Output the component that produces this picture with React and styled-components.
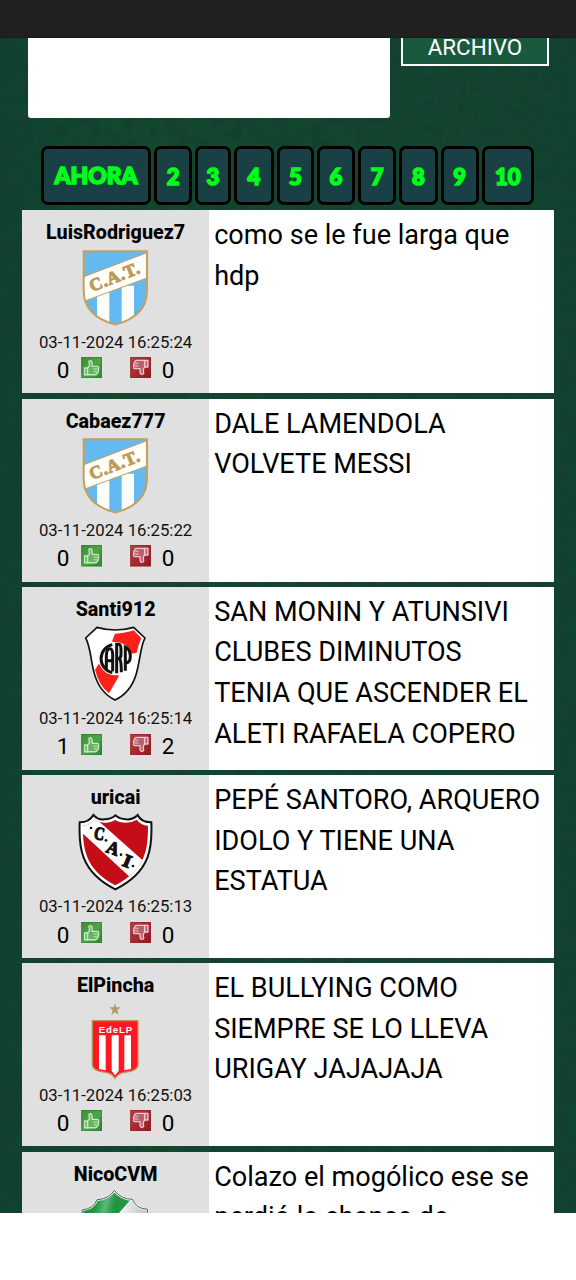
import React from "react";
import styled, { createGlobalStyle } from "styled-components";

const Global = createGlobalStyle`
  *, *::before, *::after { box-sizing: border-box; }
  body { margin: 0; background: #fff; font-family: Roboto, "Liberation Sans", sans-serif; color: #000; }
  svg { display: block; }
`;

const TopBar = styled.header`
  height: 37.7px;
  background: #202020;
  border-bottom: 1px solid #151b18;
`;

const Page = styled.main`
  position: relative;
  isolation: isolate;
  height: 1175px;
  overflow: hidden;
  background: linear-gradient(90deg, #0f432f, #12492f 20%, #12462f 65%, #12442f 90%, #104332);
`;

const Texture = styled.svg`
  position: absolute;
  inset: 0;
  z-index: -1;
`;

const FormRow = styled.section`
  display: flex;
  align-items: flex-start;
  gap: 11.4px;
  padding-left: 28px;
`;

const MessageBox = styled.div`
  width: 361.8px;
  height: 80.7px;
  background: #fff;
  border-radius: 0 0 3px 3px;
`;

const ArchiveButton = styled.button`
  width: 147.6px;
  height: 28.6px;
  padding: 0 0 7.6px;
  border: 2.5px solid #fff;
  border-top: 0;
  background: #1b593f;
  color: #fff;
  font: 400 22.4px/19px Roboto, sans-serif;
`;

const Pager = styled.nav`
  display: flex;
  margin-top: 28px;
  padding-left: 41.2px;
  height: 58.3px;
`;

const PageLink = styled.a`
  display: flex;
  align-items: center;
  justify-content: center;
  width: ${(p) => p.$width}px;
  margin-right: 3px;
  padding-top: ${(p) => (p.$word ? 0.6 : 2)}px;
  border: 3px solid #000;
  border-radius: 7px;
  background: #194044;
  color: #00ff19;
  -webkit-text-stroke: 1.6px #00ff19;
  font: 900 ${(p) => (p.$word ? 22.8 : 22)}px/1 Lato, sans-serif;
  white-space: nowrap;
`;

const Feed = styled.section`
  display: flex;
  flex-direction: column;
  gap: 5.2px;
  margin: 5.7px 21.8px 0 22.3px;
`;

const Post = styled.article`
  display: flex;
  flex: none;
  height: 183.06px;
  background: #fff;
`;

const Author = styled.aside`
  display: flex;
  flex-direction: column;
  align-items: center;
  flex: none;
  width: 186.6px;
  padding-top: 7.1px;
  background: #e0e0e0;
`;

const Name = styled.strong`
  font-size: 19.7px;
  line-height: 32.5px;
  font-weight: 800;
`;

const Crest = styled.svg`
  flex: none;
  width: 75px;
  height: 77.3px;
  margin-top: -1.3px;
`;

const DateText = styled.time`
  margin-top: 0.7px;
  font-size: 16.75px;
  line-height: 30.2px;
  color: #111;
`;

const Votes = styled.div`
  display: flex;
  align-items: flex-end;
  align-self: flex-start;
  margin-top: 0.2px;
  padding-left: 34.4px;
`;

const VotePair = styled.div`
  display: flex;
  align-items: flex-end;
  gap: 11.4px;
  & + & { margin-left: 27.8px; gap: 10.8px; }
`;

const Count = styled.span`
  width: 12.6px;
  font-size: 22.5px;
  line-height: 16.6px;
`;

const Body = styled.p`
  margin: 0;
  padding: 5px 12px 0 5.3px;
  font-size: 27.07px;
  line-height: 40.6px;
`;

function Thumb({ down }) {
  const id = down ? "thumb-down" : "thumb-up";
  return (
    <svg width="21.2" height="21.4" viewBox="0 0 62 64">
      <defs>
        <linearGradient id={id} x1="0" y1="0" x2="1" y2="1">
          <stop offset="0" stopColor={down ? "#b34545" : "#3f8a38"} />
          <stop offset=".5" stopColor={down ? "#a82a30" : "#4aa648"} />
          <stop offset="1" stopColor={down ? "#8d1a20" : "#2f8630"} />
        </linearGradient>
      </defs>
      <rect width="62" height="64" fill={`url(#${id})`} />
      <rect x="1.5" y="1.5" width="59" height="61" fill="none" stroke={down ? "#8d2028" : "#2f7c2b"} strokeWidth="3" opacity=".6" />
      <g
        transform={down ? "translate(0 63) scale(1 -1)" : undefined}
        fill={down ? "#b9606c" : "#67b363"}
        stroke={down ? "#ecc9d0" : "#c6e8bf"}
        strokeWidth="4"
        strokeLinejoin="round"
      >
        {down ? (
          <>
            <path d="M43 33H53V53H43Z" />
            <path d="M43 33L39 26L40 13Q32 8 30 15L29 28H13Q8 30 11 34Q8 38 12 41Q9 45 14 48Q14 53 19 53H43Z" />
            <path d="M14 36H25M15 44H25" fill="none" strokeWidth="3" />
          </>
        ) : (
          <>
            <path d="M10 33H19V53H10Z" />
            <path d="M19 33L25 26L23 13Q30 8 32 15L33 28H49Q54 30 51 34Q54 38 50 41Q53 45 48 48Q48 53 43 53H19Z" />
            <path d="M37 36H48M37 44H47" fill="none" strokeWidth="3" />
          </>
        )}
      </g>
    </svg>
  );
}

function Tucuman() {
  return (
    <Crest viewBox="175 130 225 232">
      <defs>
        <clipPath id="cat"><path d="M192 137H382V255C382 305 349 340 287 357C226 340 192 305 192 255Z" /></clipPath>
      </defs>
      <g clipPath="url(#cat)">
        <path fill="#63b9f0" d="M190 135H385V360H190Z" />
        <path fill="#fafdf9" d="M232 250H269V360H232ZM306 240H343V360H306Z" />
        <path fill="#fffefb" stroke="#c5a05b" strokeWidth="3" d="M185 216L390 138V214L185 290Z" />
      </g>
      <text transform="translate(217 259) rotate(-21.5)" fontFamily="Liberation Serif, serif" fontWeight="700" fontSize="53" textLength="158" lengthAdjust="spacing" fill="#bd9a58" stroke="#bd9a58" strokeWidth="3">C.A.T.</text>
      <path d="M192 137H382V255C382 305 349 340 287 357C226 340 192 305 192 255Z" fill="none" stroke="#c5a05b" strokeWidth="6" />
    </Crest>
  );
}

function River() {
  const outline = "M232 143Q287 159 342 143L376 175C361 205 362 241 350 282Q333 339 286 361Q240 339 224 282C212 241 214 205 198 175Z";
  return (
    <Crest viewBox="175 136 225 232">
      <path d={outline} fill="#fff" stroke="#111" strokeWidth="5" strokeLinejoin="round" />
      <path fill="#ff2019" d="M286 162Q318 161 342 152L365 176Q355 198 351 219L335 222L277 185ZM237 253L226 270Q238 318 268 341L298 289Z" />
      <circle cx="287" cy="237" r="50" fill="#fff" />
      <g fill="none" stroke="#111" strokeWidth="9">
        <path d="M278 195A43 43 0 0 0 278 279" />
        <path d="M260 272V229Q260 207 271 207Q279 207 279 227V275M260 243H279" />
        <path d="M291 281V194H297Q304 194 304 211V226Q304 236 294 238M300 237Q305 244 305 278" />
        <path d="M317 273V202Q332 209 332 230Q332 250 318 250" />
      </g>
    </Crest>
  );
}

function Independiente() {
  const outline = "M221 135Q236 151 255 148Q276 147 287 136Q299 147 319 148Q340 150 354 135Q364 157 395 157C398 227 396 304 287 358C180 304 177 227 180 157Q209 157 221 135Z";
  return (
    <Crest viewBox="175 129 225 232">
      <defs>
        <clipPath id="cai"><path d="M224 149Q242 161 262 158Q276 157 287 150Q299 158 319 158Q337 158 351 149Q363 166 385 167C385 232 381 298 287 346C195 298 189 232 190 167Q212 166 224 149Z" /></clipPath>
      </defs>
      <path d={outline} fill="#fff" stroke="#111" strokeWidth="6" />
      <g clipPath="url(#cai)">
        <path fill="#c40d17" d="M175 130H400V360H175Z" />
        <path fill="#fff" d="M160 164L205 125L400 298L354 343Z" />
      </g>
      <g fontFamily="Liberation Serif, serif" fontWeight="700" fontSize="55" fill="#111" stroke="#111" strokeWidth="3.5">
        <text transform="translate(221 206) rotate(10)" textLength="31" lengthAdjust="spacingAndGlyphs">C</text>
        <text transform="translate(257 245) rotate(20)" textLength="37" lengthAdjust="spacingAndGlyphs">A</text>
        <text transform="translate(305 286) rotate(22)" textLength="24" lengthAdjust="spacingAndGlyphs">I</text>
      </g>
      <g fill="#111"><circle cx="214" cy="174" r="4" /><circle cx="259" cy="211" r="4" /><circle cx="304" cy="254" r="4" /><circle cx="340" cy="288" r="4" /></g>
    </Crest>
  );
}

function Estudiantes() {
  return (
    <Crest viewBox="175 123 225 232">
      <path fill="#b19a6b" d="M286 126L290 139H303L293 148L297 162L286 154L275 162L279 148L269 139H282Z" />
      <path fill="#ff1824" stroke="#b89557" strokeWidth="4" d="M218 179H355V310Q355 331 314 334Q296 337 286 352Q277 337 258 334Q218 331 218 310Z" />
      <path fill="#fff" d="M238 223H258V328L238 324ZM276 223H297V330L286 343L276 330ZM314 223H334V324L314 328Z" />
      <text x="237" y="215" fontFamily="Liberation Sans, sans-serif" fontWeight="700" fontSize="29" textLength="101" fill="#fff">EdeLP</text>
    </Crest>
  );
}

function Ferro() {
  const outline = "M284 152Q266 179 232 180Q222 207 187 211Q186 320 284 378Q382 320 384 209Q348 207 339 179Q305 179 284 152Z";
  return (
    <Crest viewBox="175 151 225 232">
      <defs>
        <linearGradient id="green-shine" x1="0" y1="0" x2="1" y2=".2">
          <stop offset="0" stopColor="#14742c" />
          <stop offset=".35" stopColor="#239a42" />
          <stop offset=".5" stopColor="#5db978" />
          <stop offset=".65" stopColor="#25933f" />
          <stop offset="1" stopColor="#239642" />
        </linearGradient>
        <linearGradient id="silver-shine"><stop offset=".5" stopColor="#fff" /><stop offset="1" stopColor="#b4b4b4" /></linearGradient>
        <clipPath id="verde"><path d={outline} /></clipPath>
      </defs>
      <g clipPath="url(#verde)">
        <path fill="url(#silver-shine)" d="M175 150H400V380H175Z" />
        <path fill="url(#green-shine)" d="M180 150H350L329 184L298 220L240 290H180Z" />
      </g>
      <path d={outline} fill="none" stroke="#edf2ed" strokeWidth="8" />
      <path d={outline} fill="none" stroke="#555b60" strokeWidth="3" />
    </Crest>
  );
}

const pages = [
  ["AHORA", 109.8], ["2", 38.2], ["3", 35.6], ["4", 40.4], ["5", 36.4],
  ["6", 38.5], ["7", 38.2], ["8", 38.3], ["9", 38.2], ["10", 52],
];

const posts = [
  { name: "LuisRodriguez7", time: "16:25:24", up: 0, down: 0, crest: Tucuman, text: "como se le fue larga que hdp" },
  { name: "Cabaez777", time: "16:25:22", up: 0, down: 0, crest: Tucuman, text: "DALE LAMENDOLA VOLVETE MESSI" },
  { name: "Santi912", time: "16:25:14", up: 1, down: 2, crest: River, text: "SAN MONIN Y ATUNSIVI CLUBES DIMINUTOS TENIA QUE ASCENDER EL ALETI RAFAELA COPERO" },
  { name: "uricai", time: "16:25:13", up: 0, down: 0, crest: Independiente, text: "PEPÉ SANTORO, ARQUERO IDOLO Y TIENE UNA ESTATUA" },
  { name: "ElPincha", time: "16:25:03", up: 0, down: 0, crest: Estudiantes, text: "EL BULLYING COMO SIEMPRE SE LO LLEVA URIGAY JAJAJAJA" },
  { name: "NicoCVM", crest: Ferro, text: "Colazo el mogólico ese se perdió la chance de" },
];

export default function App() {
  return (
    <>
      <Global />
      <TopBar />
      <Page>
        <Texture width="576" height="1175" aria-hidden="true">
          <filter id="felt" x="0" y="0" width="100%" height="100%" colorInterpolationFilters="sRGB">
            <feTurbulence type="fractalNoise" baseFrequency=".09" numOctaves="3" seed="4" />
            <feColorMatrix values="0 0 0 0 .08  0 0 0 0 .235  0 0 0 0 .19  1.8 0 0 0 -.65" />
          </filter>
          <rect width="576" height="1175" filter="url(#felt)" />
        </Texture>
        <FormRow>
          <MessageBox />
          <ArchiveButton>ARCHIVO</ArchiveButton>
        </FormRow>
        <Pager>
          {pages.map(([label, width]) => (
            <PageLink key={label} $width={width} $word={label === "AHORA"}>{label}</PageLink>
          ))}
        </Pager>
        <Feed>
          {posts.map(({ crest: CrestArt, ...post }) => (
            <Post key={post.name}>
              <Author>
                <Name>{post.name}</Name>
                <CrestArt />
                {post.time && (
                  <>
                    <DateText>03-11-2024 {post.time}</DateText>
                    <Votes>
                      <VotePair><Count>{post.up}</Count><Thumb /></VotePair>
                      <VotePair><Thumb down /><Count>{post.down}</Count></VotePair>
                    </Votes>
                  </>
                )}
              </Author>
              <Body>{post.text}</Body>
            </Post>
          ))}
        </Feed>
      </Page>
    </>
  );
}
